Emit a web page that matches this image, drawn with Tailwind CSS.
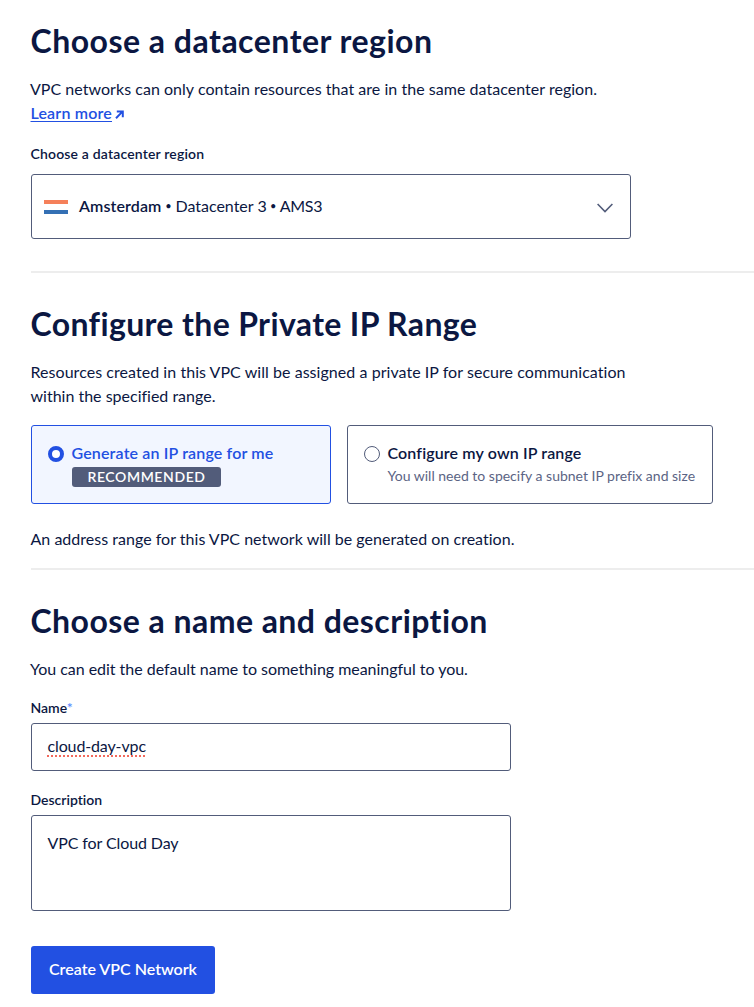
<!DOCTYPE html>
<html lang="en">
<head>
<meta charset="utf-8">
<title>Create VPC Network</title>
<script src="https://cdn.jsdelivr.net/npm/@tailwindcss/browser@4"></script>
</head>
<body class="bg-white overflow-hidden font-['Lato',sans-serif] text-base leading-6 text-[#0b1742] [font-variant-ligatures:none]">
<main class="flex flex-col pt-[21px] pl-[31px]">
  <section class="flex flex-col items-start">
    <h1 class="-ml-[.5px] whitespace-nowrap text-[32px] leading-10 font-bold tracking-[.49px]">Choose a datacenter region</h1>
    <p class="-ml-px mt-4 whitespace-nowrap tracking-[.035px]">VPC networks can only contain resources that are in the same datacenter region.</p>
    <a class="-ml-[.5px] flex items-center gap-[3px] font-semibold text-[#2250e2]"><span class="tracking-[.18px] underline decoration-1 underline-offset-2">Learn more</span>
      <svg class="mt-0.5" width="9" height="9" viewBox="0 0 9 9" fill="none" stroke="currentColor" stroke-width="2"><path d="M1 8.2 7.4 1.6M1.8 1.4H7.8V7.2"/></svg></a>
    <span class="-ml-[.5px] mt-[19px] whitespace-nowrap text-sm leading-5 font-semibold tracking-[.17px]">Choose a datacenter region</span>
    <div class="mt-2.5 flex h-[65px] w-[600px] items-center rounded-[3px] border border-[#525c7a] pl-3 pr-[17px]">
      <span class="mt-px flex h-[14px] w-6 flex-col justify-between"><span class="h-1 bg-[#f5805a]"></span><span class="h-1 bg-[#3470b4]"></span></span>
      <span class="mb-px ml-[11px] flex whitespace-nowrap"><span class="font-semibold tracking-[.1px]">Amsterdam</span><span class="w-[14px] text-center text-[11px]">•</span><span>Datacenter 3</span><span class="w-[13px] text-center text-[11px]">•</span><span class="tracking-[-.3px]">AMS3</span></span>
      <svg class="mt-0.5 ml-auto" width="16" height="10" viewBox="0 0 16 10" fill="none" stroke="#525c7a" stroke-width="1.6"><path d="M.6 1 8 8.5 15.4 1"/></svg>
    </div>
  </section>
  <hr class="mt-8 border-t-2 border-[#ededed]">
  <section class="mt-[31px] flex flex-col items-start">
    <h2 class="-ml-[.5px] whitespace-nowrap text-[32px] leading-10 font-bold tracking-[.36px]">Configure the Private IP Range</h2>
    <p class="-ml-[.5px] mt-4 whitespace-nowrap tracking-[.05px]">Resources created in this VPC will be assigned a private IP for secure communication</p>
    <p class="-ml-[.5px] whitespace-nowrap">within the specified range.</p>
    <div class="mt-[17px] flex gap-4">
      <div class="flex h-[79px] w-[300px] gap-[7.5px] rounded-[3px] border border-[#2250e2] bg-[#f2f6ff] pl-4 pt-[15px]">
        <span class="mt-[5px] size-4 shrink-0 rounded-full border-4 border-[#2250e2] bg-white"></span>
        <div class="flex flex-col items-start"><span class="whitespace-nowrap font-semibold tracking-[.15px] text-[#2250e2]">Generate an IP range for me</span>
          <span class="mt-0.5 ml-[.5px] flex h-5 w-[149px] items-center justify-center rounded-[3px] bg-[#525c7a] text-sm font-semibold tracking-[.6px] text-white">RECOMMENDED</span></div>
      </div>
      <div class="flex h-[79px] w-[366px] gap-[7.5px] rounded-[3px] border border-[#525c7a] pl-4 pt-[15px]">
        <span class="mt-[5px] size-4 shrink-0 rounded-full border border-[#525c7a] bg-white"></span>
        <div class="flex flex-col items-start"><span class="whitespace-nowrap font-semibold tracking-[.13px]">Configure my own IP range</span>
          <span class="mt-px whitespace-nowrap text-sm leading-5 text-[#5b6484]">You will need to specify a subnet IP prefix and size</span></div>
      </div>
    </div>
    <p class="-ml-[.5px] mt-[23px] whitespace-nowrap tracking-[.02px]">An address range for this VPC network will be generated on creation.</p>
  </section>
  <hr class="mt-[17px] border-t-2 border-[#ededed]">
  <section class="mt-[31px] flex flex-col items-start">
    <h2 class="-ml-[.5px] whitespace-nowrap text-[32px] leading-10 font-bold tracking-[.45px]">Choose a name and description</h2>
    <p class="-ml-px mt-4 whitespace-nowrap tracking-[-.03px]">You can edit the default name to something meaningful to you.</p>
    <span class="-ml-[.5px] mt-[17px] text-sm leading-5 font-semibold">Name<span class="text-[#5b8cff]">*</span></span>
    <div class="mt-[5px] flex h-12 w-[480px] items-center rounded-[3px] border border-[#525c7a] pb-0.5 pl-[15.5px]"><span class="tracking-[-.13px] underline decoration-dotted decoration-[#f2695c] decoration-2 underline-offset-[3px]">cloud-day-vpc</span></div>
    <span class="-ml-[.5px] mt-[19px] text-sm leading-5 font-semibold">Description</span>
    <div class="mt-[5px] h-24 w-[480px] rounded-[3px] border border-[#525c7a] pl-[15.5px] pt-[15px] tracking-[-.1px]">VPC for Cloud Day</div>
    <button class="mt-[35px] h-12 w-[184px] whitespace-nowrap rounded-[3px] bg-[#2250e2] pb-0.5 font-semibold text-white">Create VPC Network</button>
  </section>
</main>
</body>
</html>
